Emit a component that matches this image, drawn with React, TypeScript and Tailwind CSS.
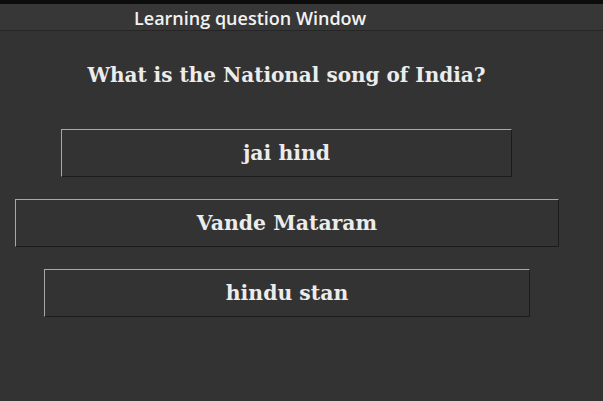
export default function App() {
  const answers = [
    { text: "jai hind", cls: "ml-[61px] w-[451px]" },
    { text: "Vande Mataram", cls: "ml-[15px] w-[544px]" },
    { text: "hindu stan", cls: "ml-[44px] w-[486px]" },
  ];

  return (
    <div className="w-[603px] h-[401px] bg-[#333333] flex flex-col overflow-hidden">
      <div className="h-[4px] bg-[#0c0c0c]" />
      <div className="h-[27px] bg-[#373737] border-b border-[#262626] flex items-center">
        <span className="ml-[134px] mt-[2px] text-[18px] font-semibold text-[#f2f2f2] font-['Open_Sans',sans-serif] leading-none">
          Learning question Window
        </span>
      </div>
      <div className="h-[29px]" />
      <h1 className="text-center text-[20px] font-bold text-[#ececec] font-['DejaVu_Serif',serif] leading-[30px] ml-[-30px]">
        What is the National song of India?
      </h1>
      <div className="flex flex-col gap-[22px] mt-[39px]">
        {answers.map((a) => (
          <button
            key={a.text}
            className={`${a.cls} h-[48px] border-t border-l border-[#a8a8a8] border-r border-b border-r-[#1c1c1c] border-b-[#1c1c1c] bg-[#333333] text-[#ececec] text-[20.4px] font-bold font-['DejaVu_Serif',serif] flex items-center justify-center`}
          >
            {a.text}
          </button>
        ))}
      </div>
    </div>
  );
}
